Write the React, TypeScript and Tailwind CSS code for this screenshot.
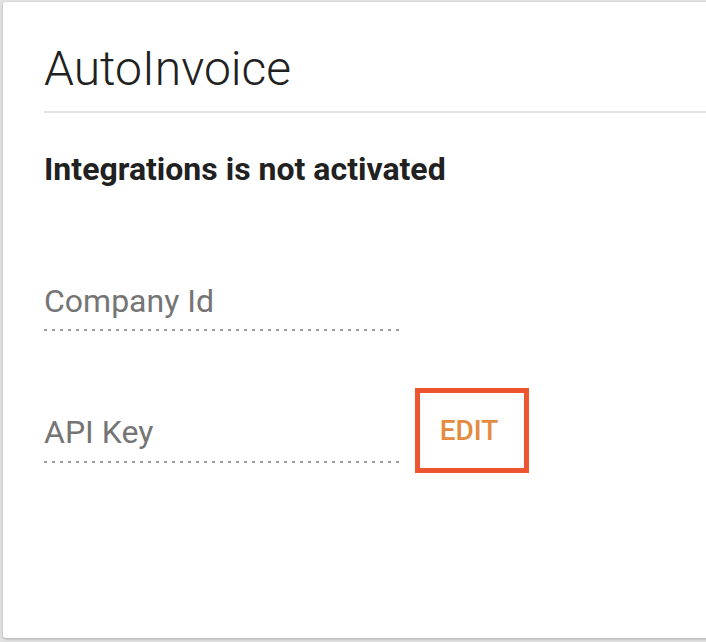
import React from "react";

export default function App() {
  return (
    <div className="w-[706px] h-[642px] overflow-hidden bg-[#e2e2e2] pt-[2px] pl-[3px]" style={{ fontFamily: "Roboto, 'Noto Sans', sans-serif" }}>
      <div className="w-[740px] h-[636px] bg-white rounded-[3px] shadow-[0_1px_3px_rgba(0,0,0,0.25)] pl-[41px] pt-[43px]">
        <div className="text-[48px] leading-[48px] font-light text-[#212121]">AutoInvoice</div>
        <div className="mt-[18px] h-[2px] bg-[#e3e3e3]" />
        <div className="mt-[40px] text-[32px] leading-[32px] font-bold text-[#212121]">Integrations is not activated</div>
        <div className="mt-[100px] w-[356px]">
          <div className="text-[32px] leading-[32px] text-[#757575]">Company Id</div>
          <div className="mt-[12px] h-[2px] w-full bg-[repeating-linear-gradient(to_right,#9e9e9e_0_3px,transparent_3px_8px)]" />
        </div>
        <div className="mt-[57px] flex items-start">
          <div className="w-[356px] pt-[28px]">
            <div className="text-[32px] leading-[32px] text-[#757575]">API Key</div>
            <div className="mt-[13px] h-[2px] w-full bg-[repeating-linear-gradient(to_right,#9e9e9e_0_3px,transparent_3px_8px)]" />
          </div>
          <div className="ml-[15px] w-[114px] h-[85px] border-[5px] border-[#ec5530] flex items-center justify-center pr-[6px]">
            <span className="text-[28px] leading-[28px] font-medium text-[#e38b3e]">EDIT</span>
          </div>
        </div>
      </div>
    </div>
  );
}
